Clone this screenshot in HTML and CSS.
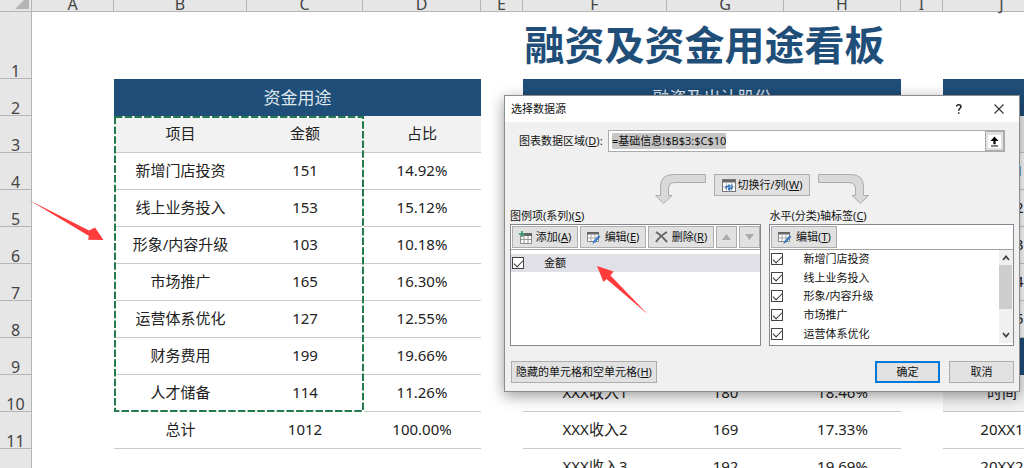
FILE: index.html
```html
<!DOCTYPE html>
<html lang="zh-CN">
<head>
<meta charset="utf-8">
<title>融资及资金用途看板</title>
<link rel="stylesheet" href="styles.css">
</head>
<body>
<main class="sheet">
  <table class="grid">
    <colgroup>
      <col class="c-row"><col class="c-a"><col class="c-b"><col class="c-c"><col class="c-d"><col class="c-gap"><col class="c-f"><col class="c-g"><col class="c-g"><col class="c-gap"><col class="c-d"><col class="c-g"><col class="c-g">
    </colgroup>
    <thead>
      <tr class="letters"><th class="corner"><svg width="14" height="14" viewBox="0 0 14 14"><path d="M14 0V14H0Z" fill="#b4b4b4"/></svg></th><th>A</th><th>B</th><th>C</th><th>D</th><th>E</th><th>F</th><th>G</th><th>H</th><th>I</th><th>J</th><th></th><th></th></tr>
    </thead>
    <tbody>
      <tr class="title-row"><th>1</th><td></td><td class="title" colspan="11">融资及资金用途看板</td></tr>
      <tr><th>2</th><td></td><td class="band" colspan="3">资金用途</td><td></td><td class="band" colspan="3">融资及出让股份</td><td></td><td class="band" colspan="3"></td></tr>
      <tr><th>3</th><td></td><td class="head">项目</td><td class="head">金额</td><td class="head">占比</td><td></td><td class="head"></td><td class="head"></td><td class="head"></td><td></td><td class="head"></td><td class="head"></td><td class="head"></td></tr>
      <tr><th>4</th><td></td><td class="cell">新增门店投资</td><td class="cell">151</td><td class="cell">14.92%</td><td></td><td class="cell"></td><td class="cell"></td><td class="cell"></td><td></td><td class="cell">20XX1</td><td class="cell"></td><td class="cell"></td></tr>
      <tr><th>5</th><td></td><td class="cell">线上业务投入</td><td class="cell">153</td><td class="cell">15.12%</td><td></td><td class="cell"></td><td class="cell"></td><td class="cell"></td><td></td><td class="cell">20XX2</td><td class="cell"></td><td class="cell"></td></tr>
      <tr><th>6</th><td></td><td class="cell">形象/内容升级</td><td class="cell">103</td><td class="cell">10.18%</td><td></td><td class="cell"></td><td class="cell"></td><td class="cell"></td><td></td><td class="cell">20XX3</td><td class="cell"></td><td class="cell"></td></tr>
      <tr><th>7</th><td></td><td class="cell">市场推广</td><td class="cell">165</td><td class="cell">16.30%</td><td></td><td class="cell"></td><td class="cell"></td><td class="cell"></td><td></td><td class="cell">20XX4</td><td class="cell"></td><td class="cell"></td></tr>
      <tr><th>8</th><td></td><td class="cell">运营体系优化</td><td class="cell">127</td><td class="cell">12.55%</td><td></td><td class="cell"></td><td class="cell"></td><td class="cell"></td><td></td><td class="cell">20XX5</td><td class="cell"></td><td class="cell"></td></tr>
      <tr><th>9</th><td></td><td class="cell">财务费用</td><td class="cell">199</td><td class="cell">19.66%</td><td></td><td class="cell"></td><td class="cell"></td><td class="cell"></td><td></td><td class="band" colspan="3"></td></tr>
      <tr><th>10</th><td></td><td class="cell">人才储备</td><td class="cell">114</td><td class="cell">11.26%</td><td></td><td class="cell">XXX收入1</td><td class="cell">180</td><td class="cell">18.46%</td><td></td><td class="head">时间</td><td class="head"></td><td class="head"></td></tr>
      <tr><th>11</th><td></td><td class="cell">总计</td><td class="cell">1012</td><td class="cell">100.00%</td><td></td><td class="cell">XXX收入2</td><td class="cell">169</td><td class="cell">17.33%</td><td></td><td class="cell">20XX1</td><td class="cell"></td><td class="cell"></td></tr>
      <tr><th></th><td></td><td></td><td></td><td></td><td></td><td class="cell">XXX收入3</td><td class="cell">192</td><td class="cell">19.69%</td><td></td><td class="cell">20XX2</td><td class="cell"></td><td class="cell"></td></tr>
    </tbody>
  </table>

  <svg class="marquee" width="250" height="296" viewBox="0 0 250 296" fill="none" stroke-width="2"><rect x="1" y="1" width="248" height="294" stroke="#fff"/><rect x="1" y="1" width="248" height="294" stroke="#237a4b" stroke-dasharray="7.500 2.200"/></svg>

  <section class="dialog" role="dialog" aria-labelledby="dlg-title">
    <header class="titlebar">
      <h1 id="dlg-title">选择数据源</h1>
      <button class="tb" aria-label="帮助"><svg width="10" height="12" viewBox="0 0 10 12" fill="none" stroke="#222" stroke-width="1.5"><path d="M2.5 3.5C2.7 1 7 1 7 3.5C7 5.3 4.7 5.4 4.7 7.8M4.7 9.2V10.8"/></svg></button>
      <button class="tb" aria-label="关闭"><svg width="10" height="10" viewBox="0 0 10 10" stroke="#333" stroke-width="1.1"><path d="M.5 .5L9.5 9.5M9.5 .5L.5 9.5"/></svg></button>
    </header>
    <div class="source">
      <label for="range">图表数据区域(<u>D</u>):</label>
      <div class="range">
        <input id="range" type="text" value="=基础信息!$B$3:$C$10">
        <button aria-label="折叠对话框"><svg width="13" height="13" viewBox="0 0 13 13"><rect width="13" height="13" fill="#fff"/><path d="M6.5 1.5L10.5 6H7.6V9.3H5.4V6H2.5Z"/><path d="M3 10.5H10V11.5H3Z"/></svg></button>
      </div>
    </div>
    <div class="switch">
      <svg width="51" height="30" viewBox="0 0 51 30" fill="#d9d9d9" stroke="#ababab"><path d="M50.500 .5V8.500H20Q13.500 8.500 13.500 15V21.500H17L8.500 29.500L.5 21.500H5.500V13Q5.500 .5 18 .5Z"/></svg>
      <button class="btn"><svg width="14" height="13" viewBox="0 0 14 13"><rect x=".5" y=".5" width="13" height="12" fill="#fff" stroke="#777"/><path d="M1 1H13V3.500H1Z" fill="#666"/><path d="M4.500 4V12M9.500 4V12M1 8H13" stroke="#bbb"/><path d="M4 10V7.500H8M6.500 5.500L8.500 7.500M10 5.500V9.500H6M8 11.500L6 9.500" fill="none" stroke="#2a72b8" stroke-width="1.300"/></svg><span>切换行/列(<u>W</u>)</span></button>
      <svg width="51" height="30" viewBox="0 0 51 30" fill="#d9d9d9" stroke="#ababab"><path d="M.5 .5V8.500H31Q37.500 8.500 37.500 15V21.500H34L42.500 29.500L50.500 21.500H45.500V13Q45.500 .5 33 .5Z"/></svg>
    </div>
    <div class="lists">
      <div class="col">
        <h2>图例项(系列)(<u>S</u>)</h2>
        <div class="box">
          <div class="tools">
            <button class="btn wide"><svg width="13" height="13" viewBox="0 0 13 13"><path d="M1.500 4.500H12.500V12.500H1.500Z" fill="#fff" stroke="#888"/><path d="M5 2H13V5H5Z" fill="#666"/><path d="M5 5V12M9 5V12M2 8.500H12" stroke="#999"/><path d="M3 0V6M0 3H6" stroke="#2f8f63" stroke-width="1.500"/></svg><span>添加(<u>A</u>)</span></button>
            <button class="btn wide"><svg width="14" height="13" viewBox="0 0 14 13"><path d="M.5 1.500H11.500V10.500H.5Z" fill="#fff" stroke="#888"/><path d="M0 1H12V3.500H0Z" fill="#666"/><path d="M4 4V10M8 4V10M1 7H11" stroke="#aaa"/><path d="M12.500 5L7 11" stroke="#3d7cc4" stroke-width="2.500"/><path d="M5.500 12.800L6 10L8 11.800Z" fill="#3d7cc4"/></svg><span>编辑(<u>E</u>)</span></button>
            <button class="btn wide"><svg width="13" height="12" viewBox="0 0 13 12" fill="none" stroke="#666" stroke-width="2"><path d="M1 1Q6 4 12 11M12 1Q5 5 1 11"/></svg><span>删除(<u>R</u>)</span></button>
            <button class="btn step" aria-label="上移"><svg width="9" height="6" viewBox="0 0 9 6"><path d="M0 6L4.500 0L9 6Z" fill="#a9a9ae"/></svg></button>
            <button class="btn step" aria-label="下移"><svg width="9" height="6" viewBox="0 0 9 6"><path d="M0 0L4.500 6L9 0Z" fill="#a9a9ae"/></svg></button>
          </div>
          <div class="items series">
            <label class="item selected"><input type="checkbox" checked>金额</label>
          </div>
        </div>
      </div>
      <div class="col">
        <h2>水平(分类)轴标签(<u>C</u>)</h2>
        <div class="box">
          <div class="tools">
            <button class="btn wide"><svg width="14" height="13" viewBox="0 0 14 13"><path d="M.5 1.500H11.500V10.500H.5Z" fill="#fff" stroke="#888"/><path d="M0 1H12V3.500H0Z" fill="#666"/><path d="M4 4V10M8 4V10M1 7H11" stroke="#aaa"/><path d="M12.500 5L7 11" stroke="#3d7cc4" stroke-width="2.500"/><path d="M5.500 12.800L6 10L8 11.800Z" fill="#3d7cc4"/></svg><span>编辑(<u>T</u>)</span></button>
          </div>
          <div class="scroller">
            <div class="items axis">
              <label class="item"><input type="checkbox" checked>新增门店投资</label>
              <label class="item"><input type="checkbox" checked>线上业务投入</label>
              <label class="item"><input type="checkbox" checked>形象/内容升级</label>
              <label class="item"><input type="checkbox" checked>市场推广</label>
              <label class="item"><input type="checkbox" checked>运营体系优化</label>
            </div>
            <div class="bar">
              <svg width="8" height="6" viewBox="0 0 8 6" fill="none" stroke="#444" stroke-width="1.800"><path d="M1 5L4 1.500L7 5"/></svg>
              <div class="thumb"></div>
              <svg width="8" height="6" viewBox="0 0 8 6" fill="none" stroke="#444" stroke-width="1.800"><path d="M1 1L4 4.500L7 1"/></svg>
            </div>
          </div>
        </div>
      </div>
    </div>
    <footer class="actions">
      <button class="btn hidden-cells"><span>隐藏的单元格和空单元格(<u>H</u>)</span></button>
      <button class="btn act primary">确定</button>
      <button class="btn act">取消</button>
    </footer>
  </section>

  <svg class="pointer range-pointer" width="75" height="41" viewBox="0 0 75 41"><path d="M0 0L60 30.500L66 27.500L74.500 40L59 39.700L60 36Z" fill="#ff3b3b"/></svg>
  <svg class="pointer series-pointer" width="52" height="49" viewBox="0 0 52 49"><path d="M0 0L16.500 5.500L13.500 9.500L51 48.500L9.500 13L6.500 16Z" fill="#ff3b3b"/></svg>
</main>
<script src="app.js"></script>
</body>
</html>
```
FILE: styles.css
```css
* { box-sizing: border-box; }
body { margin: 0; background: #fff; font-family: "Noto Sans", "Noto Sans CJK SC", sans-serif; color: #222; }
button, input { font: inherit; color: inherit; }
.sheet { position: relative; height: 100vh; overflow: hidden; }

/* Worksheet */
.grid { width: 1295px; margin-top: -12px; table-layout: fixed; border-collapse: separate; border-spacing: 0; font-size: 15px; line-height: 20px; }
.c-row { width: 32px; }
.c-a { width: 82px; }
.c-b { width: 133px; }
.c-c { width: 116px; }
.c-d { width: 118px; }
.c-gap { width: 42px; }
.c-f { width: 144px; }
.c-g { width: 117px; }
.grid tr { height: 37px; }
.grid td { padding: 0 0 2px; text-align: center; vertical-align: middle; }
.grid th { padding: 0; background: #e6e6e6; border-right: 1px solid #b5b5b5; border-bottom: 1px solid #b5b5b5; font-size: 16px; font-weight: 400; line-height: 14px; color: #444; vertical-align: bottom; }
.grid .letters { height: 24px; }
.grid .corner { padding-right: 2px; text-align: right; }
.corner svg { display: block; margin: 0 0 2px auto; }
.grid .title-row { height: 67px; }
.grid .title { font-size: 40px; font-weight: 700; line-height: 48px; color: #1f4e79; }
.grid .band { padding: 0; background: #1f4e79; color: #dfe7ef; font-size: 17px; }
.grid .head { background: #f2f2f2; border-bottom: 1px solid #c9c9c9; }
.grid .cell { border-bottom: 1px solid #c9c9c9; }
.marquee { position: absolute; left: 114px; top: 116px; }
.pointer { position: absolute; }
.range-pointer { left: 29px; top: 200px; }
.series-pointer { left: 597px; top: 266px; }

/* Dialog */
.dialog { position: absolute; left: 504px; top: 95px; width: 516px; background: #f0f0f0; border: 1px solid #8c8c8c; box-shadow: 0 4px 14px rgba(0, 0, 0, .4); font-size: 11px; line-height: 16px; color: #111; }
.titlebar { display: flex; align-items: center; height: 26px; padding-left: 6px; background: #fff; }
.titlebar h1 { flex: 1; margin: 0; font-size: 11px; font-weight: 400; }
.tb { display: flex; align-items: center; justify-content: center; width: 40px; height: 24px; padding: 0; border: 0; background: none; }
.source { display: flex; align-items: center; justify-content: space-between; gap: 4px; padding: 8px 14px 0; white-space: nowrap; }
.range { display: flex; width: 397px; height: 22px; border: 1px solid #ababab; background: #fff; }
.range input { flex: 1; min-width: 0; padding: 0 3px; border: 0; outline: 0; background: none; }
.range input::selection { background: #c6c6c6; color: #111; }
.range button { display: flex; align-items: center; justify-content: center; width: 19px; padding: 0; border: 1px solid #ababab; background: #e1e1e1; }
.btn { display: flex; align-items: center; justify-content: center; gap: 4px; height: 22px; padding: 0; border: 1px solid #adadad; background: #e1e1e1; white-space: nowrap; }
.btn u, label u, h2 u { text-underline-offset: 1px; }
.switch { display: flex; justify-content: center; gap: 8px; padding-top: 22px; }
.switch .btn { width: 96px; gap: 2px; }
.lists { display: grid; grid-template-columns: 252fr 245fr; gap: 8px; padding: 4px 5px 0; }
.col h2 { margin: 0; font-size: 11px; font-weight: 400; line-height: 16px; }
.box { border: 1px solid #828790; background: #fff; }
.tools { display: flex; gap: 2px; padding: 1px; height: 25px; border-bottom: 1px solid #a0a0a0; }
.wide { width: 66px; }
.step { flex: 1; }
.items { display: flex; flex-direction: column; height: 95px; }
.series { padding-top: 4px; }
.axis { flex: 1; padding-bottom: 2px; }
.axis .item { flex: 1; }
.item { display: flex; align-items: center; gap: 20px; min-height: 18px; padding-left: 1px; }
.selected { background: #e0e0e6; }
.item input { appearance: none; width: 12px; height: 12px; margin: 0; border: 1px solid #444; background: #fff; display: grid; place-items: center; }
.item input:checked::before { content: ""; width: 8px; height: 4px; border: solid #333; border-width: 0 0 1px 1px; transform: translateY(-1px) rotate(-45deg); }
.scroller { display: flex; }
.bar { display: flex; flex-direction: column; align-items: center; width: 14px; height: 93px; padding: 5px 0; background: #f0f0f0; }
.thumb { width: 13px; height: 44px; margin: 4px 0 auto; background: #cdcdcd; }
.actions { display: flex; gap: 9px; padding: 15px 5px 8px 6px; }
.hidden-cells { width: 146px; margin-right: auto; }
.act { width: 65px; }
.primary { border: 2px solid #0078d7; }
```
FILE: app.js
```js
const range = document.getElementById("range");
range.focus();
range.select();
```
